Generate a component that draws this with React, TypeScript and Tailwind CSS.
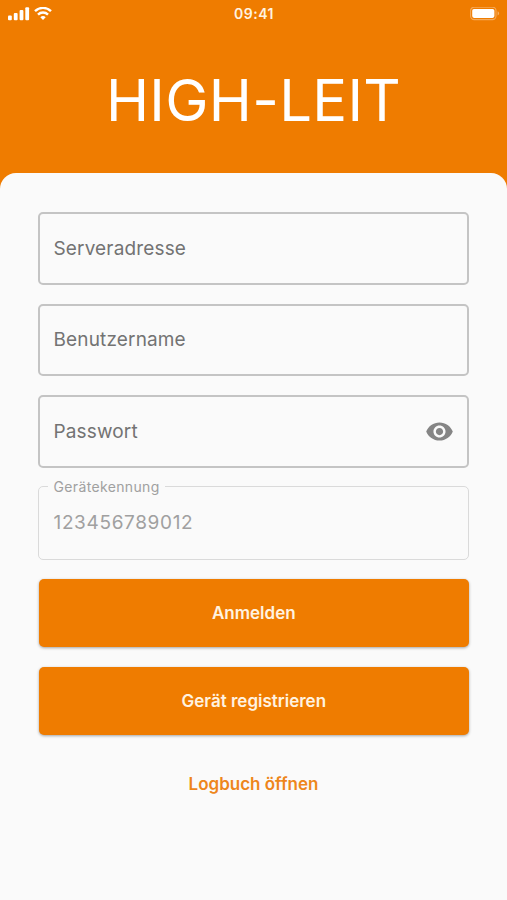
import { FC, ReactNode, useState } from "react";
import { MdVisibility, MdVisibilityOff } from "react-icons/md";

const SignalIcon: FC = () => (
	<svg width={22} height={14} viewBox="0 0 22 14" fill="white">
		<rect x={0} y={8.6} width={3.8} height={4.6} rx={1} />
		<rect x={5.8} y={6.1} width={3.8} height={7.1} rx={1} />
		<rect x={11.6} y={3.1} width={3.8} height={10.1} rx={1} />
		<rect x={17.3} y={0.2} width={3.8} height={13} rx={1} />
	</svg>
);

const WifiIcon: FC = () => (
	<svg width={18} height={14} viewBox="0 0 18 14" fill="none" stroke="white" strokeWidth={2.4}>
		<path d="M1 4.2a11.4 11.4 0 0 1 16 0" />
		<path d="M4 7.6a7.1 7.1 0 0 1 10 0" />
		<path d="M9 12.9 6.3 10.2a3.9 3.9 0 0 1 5.4 0Z" fill="white" stroke="none" />
	</svg>
);

const BatteryIcon: FC = () => (
	<svg width={30} height={14} viewBox="0 0 30 14">
		<rect x={0.6} y={0.2} width={25.4} height={12.4} rx={3.6} fill="none" stroke="white" strokeOpacity={0.35} strokeWidth={1.1} />
		<rect x={2.2} y={1.9} width={22.2} height={9} rx={1.8} fill="white" />
		<path d="M27.6 4.2a2.4 2.4 0 0 1 0 4.4Z" fill="white" fillOpacity={0.4} />
	</svg>
);

const StatusBar: FC = () => (
	<div className="grid h-[27px] grid-cols-3 items-center pr-[7px] pl-[8px]">
		<div className="flex gap-1">
			<SignalIcon />
			<WifiIcon />
		</div>
		<span className="text-center text-[14px] font-semibold tracking-[0.5px] text-[#fff3e0]">09:41</span>
		<div className="flex justify-end">
			<BatteryIcon />
		</div>
	</div>
);

const Field: FC<{ label: string; type?: string; children?: ReactNode }> = ({ label, type = "text", children }) => (
	<div className="flex h-[72.6px] items-center rounded-[5px] border-2 border-[#c4c4c4] px-[13.5px]">
		<input
			type={type}
			placeholder={label}
			className="min-w-0 grow bg-transparent pt-px text-[19px] tracking-[0.15px] text-[#737373] outline-none placeholder:text-[#737373]"
		/>
		{children}
	</div>
);

const Button: FC<{ children: ReactNode }> = ({ children }) => (
	<button className="ml-[0.6px] h-[68.5px] rounded-[5px] bg-[#ef7c00] pt-[2px] text-[17px] font-semibold text-[#fff3e0] shadow-[0_1px_3px_rgba(0,0,0,0.35)]">
		{children}
	</button>
);

export default function App() {
	const [showPassword, setShowPassword] = useState(false);
	const Eye = showPassword ? MdVisibilityOff : MdVisibility;

	return (
		<div className="flex h-screen flex-col bg-[#ef7c00] font-['Inter',sans-serif]">
			<StatusBar />
			<header className="flex h-[146px] items-center justify-center">
				<h1 className="text-[58px] leading-none tracking-[0.3px] text-white">HIGH-LEIT</h1>
			</header>
			<main className="flex grow flex-col rounded-t-[16px] bg-[#fafafa] px-[38px] pt-[39px]">
				<form className="flex flex-col" onSubmit={e => e.preventDefault()}>
					<div className="flex flex-col gap-[19.1px]">
						<Field label="Serveradresse" />
						<Field label="Benutzername" />
						<Field label="Passwort" type={showPassword ? "text" : "password"}>
							<button type="button" onClick={() => setShowPassword(!showPassword)}>
								<Eye className="size-[29px] text-[#858585]" />
							</button>
						</Field>
					</div>
					{/* read only, set by the device itself */}
					<fieldset className="mt-[10px] h-[82px] rounded-[5px] border border-[#dadada] px-[9px]">
						<legend className="px-[5.5px] text-[14px] leading-[18px] tracking-[0.35px] text-[#a0a0a0]">Gerätekennung</legend>
						<p className="px-[5.5px] pt-[13px] text-[19px] leading-[28px] tracking-[0.65px] text-[#a0a0a0]">123456789012</p>
					</fieldset>
					<div className="mt-[19px] flex flex-col gap-[19.5px]">
						<Button>Anmelden</Button>
						<Button>Gerät registrieren</Button>
					</div>
				</form>
				<a href="#logbuch" className="mt-[37px] self-center text-[17px] font-semibold text-[#ee861b]">
					Logbuch öffnen
				</a>
			</main>
		</div>
	);
}
